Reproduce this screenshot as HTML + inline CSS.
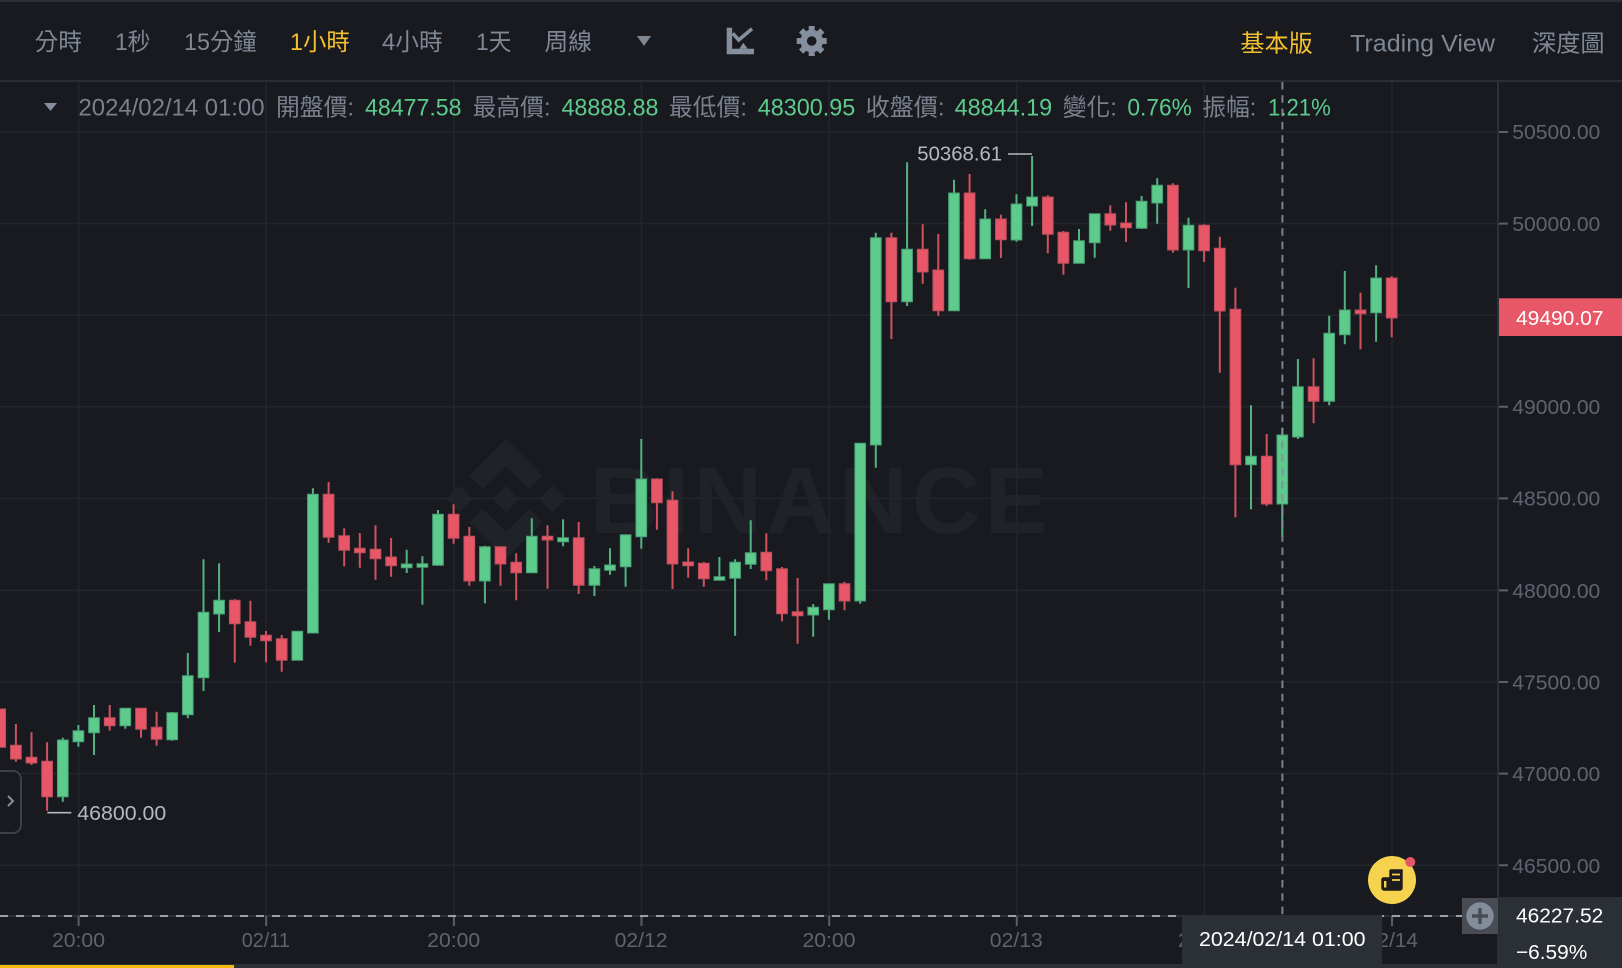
<!DOCTYPE html>
<html><head><meta charset="utf-8"><style>
html,body{margin:0;padding:0;background:#181a20;width:1622px;height:968px;overflow:hidden}
svg{display:block}
text{font-family:"Liberation Sans","Noto Sans CJK TC",sans-serif}
.h{font-size:24px;fill:#7f8793}
.y{fill:#f5c02f}
.r{font-size:24px;fill:#7a818d}
.g{font-size:24px;fill:#5ccb8b}
.p{font-size:20.5px;fill:#5e646f}
.t{font-size:20px;fill:#5e646f}
.m{font-size:20.5px;fill:#b4b8bf}
.w{font-size:20.5px;fill:#fff}
</style></head><body>
<svg width="1622" height="968" viewBox="0 0 1622 968" xmlns="http://www.w3.org/2000/svg">
<rect width="1622" height="968" fill="#181a20"/>
<rect width="1622" height="2" fill="#2b2f36"/>
<rect y="80" width="1622" height="2" fill="#2a2d33"/>

<!-- watermark -->
<g fill="#1f2226">
<polygon points="506,439 542.7,475.7 529.3,489 506,466.5 482.7,489 469.3,475.7"/>
<polygon points="506,559 542.7,522.3 529.3,509 506,531.5 482.7,509 469.3,522.3"/>
<polygon points="506,485.7 519.3,499 506,512.3 492.7,499"/>
<polygon points="459.3,485.7 472.6,499 459.3,512.3 446,499"/>
<polygon points="552.7,485.7 566,499 552.7,512.3 539.4,499"/>
<text x="590" y="533" font-size="95" font-weight="700" textLength="458" lengthAdjust="spacing" style="font-size:95px;font-weight:700">BINANCE</text>
</g>

<!-- grid -->
<path d="M0 132H1497M0 223.6H1497M0 315.2H1497M0 406.8H1497M0 498.4H1497M0 590.4H1497M0 682H1497M0 773.6H1497M0 865.2H1497M78.6 82V916M266.2 82V916M453.9 82V916M641.5 82V916M829.2 82V916M1016.8 82V916M1204.4 82V916M1392 82V916" stroke="#22252b" stroke-width="1.6" fill="none"/>

<!-- wicks -->
<path stroke="#d0525f" stroke-width="2" fill="none" d="M15.9 724V761.7M31.5 732.3V765M47.1 742.3V810.7M109.7 705V730.7M141 708.3V737.7M156.6 711.7V745.7M234.75 599.3V662.7M250.4 600.7V645.7M266 631V662.3M281.7 635V671.7M328.6 482V542.7M344.2 528.3V566.3M359.8 533V567.7M375.5 525.3V579.7M391.1 538V576.7M453.6 504.3V543.7M469.3 527V585.7M500.5 546.7V585.7M516.2 553.3V600.3M547.5 525.3V588.7M578.7 522V594M656.9 478.3V529.7M672.5 491.3V589M688.2 548.3V577.7M703.8 562V586.7M766.3 533.3V580.3M782 567V621.3M797.6 578V643.7M844.5 581.7V610.3M891.4 232.7V339M922.7 224.3V283.7M938.3 234V315.7M969.6 174V259.7M1000.9 214.7V258M1047.8 195.3V253.3M1063.4 231V274.7M1110.3 205.3V230.7M1126 202.3V242M1172.9 183.3V252.7M1204.1 224.3V262M1219.8 236.7V372.7M1235.4 287.7V517.3M1266.7 434V506M1313.6 358.3V423.3M1360.5 292.7V349.3M1391.7 276.3V337.3"/>
<path stroke="#52b381" stroke-width="2" fill="none" d="M62.8 737.7V801.7M78.4 725V746.7M94 705V755M125.3 708.3V728.7M172.2 712V740.7M187.8 653V718.3M203.5 559.3V691M219.1 563.3V632M312.9 488.3V633M406.7 549.7V573M422.4 556.3V604.7M438 510V565.7M484.9 545.7V603.3M531.8 518.3V572.7M563.1 519.3V546.3M594.4 566V596M610 548.3V574.7M625.6 534.7V586.7M641.3 439V548.7M719.4 557V580.3M735.1 559.3V635.7M750.7 520.3V569M813.2 604V636.7M828.9 583.7V619.7M860.2 443.3V603.7M875.8 232.7V467.7M907.1 162.3V306M954 179.7V310.7M985.2 209.3V258.7M1016.5 194.3V241.7M1032.1 156V226M1079 229V263.3M1094.7 213.7V257.7M1141.6 196V229M1157.2 178.3V223.7M1188.5 217.7V288M1251 405.3V509.3M1282.3 427.7V536.7M1297.9 359V439M1329.2 315.7V405.3M1344.8 271V344.3M1376.1 265.3V341.7"/>

<!-- bodies -->
<path fill="#e75767" stroke="#bb4f5c" stroke-width="1" d="M-5.15 709h10.7V747.3h-10.7zM10.55 745.3h10.7V759h-10.7zM26.15 757.3h10.7V763h-10.7zM41.75 761.3h10.7V796.7h-10.7zM104.35 717.7h10.7V725.7h-10.7zM135.65 708.3h10.7V729.3h-10.7zM151.25 727.3h10.7V739.3h-10.7zM229.4 600.3h10.7V623.7h-10.7zM245.05 621.7h10.7V637.3h-10.7zM260.65 635.3h10.7V640.7h-10.7zM276.35 638.7h10.7V660.3h-10.7zM323.25 494.3h10.7V537.3h-10.7zM338.85 535.7h10.7V550.3h-10.7zM354.45 548.3h10.7V552.7h-10.7zM370.15 549.3h10.7V558.7h-10.7zM385.75 557h10.7V565.7h-10.7zM448.25 514.3h10.7V538.3h-10.7zM463.95 536.3h10.7V581h-10.7zM495.15 546.7h10.7V564h-10.7zM510.85 562.3h10.7V572.7h-10.7zM542.15 536.3h10.7V540h-10.7zM573.35 537.7h10.7V585.3h-10.7zM651.55 479h10.7V502.7h-10.7zM667.15 500.3h10.7V564h-10.7zM682.85 562h10.7V565.7h-10.7zM698.45 563.3h10.7V578.7h-10.7zM760.95 552.3h10.7V570.7h-10.7zM776.65 568.7h10.7V613.7h-10.7zM792.25 611.7h10.7V615.7h-10.7zM839.15 583.7h10.7V601h-10.7zM886.05 237.7h10.7V301.7h-10.7zM917.35 249.3h10.7V272h-10.7zM932.95 270h10.7V310.7h-10.7zM964.25 193h10.7V258.7h-10.7zM995.55 219h10.7V239.7h-10.7zM1042.45 197h10.7V234.3h-10.7zM1058.05 232.3h10.7V263.3h-10.7zM1104.95 213.7h10.7V225h-10.7zM1120.65 223h10.7V227.7h-10.7zM1167.55 185.3h10.7V250h-10.7zM1198.75 225.3h10.7V250.7h-10.7zM1214.45 248.3h10.7V311h-10.7zM1230.05 309.3h10.7V464.7h-10.7zM1261.35 456.3h10.7V504h-10.7zM1308.25 386.7h10.7V401.3h-10.7zM1355.15 310h10.7V313.7h-10.7zM1386.35 278h10.7V318h-10.7z"/>
<path fill="#5ccb8b" stroke="#4a9f74" stroke-width="1" d="M57.45 740h10.7V796.7h-10.7zM73.05 730.7h10.7V741.7h-10.7zM88.65 717.7h10.7V732.7h-10.7zM119.95 708.3h10.7V725.7h-10.7zM166.85 712.7h10.7V739.7h-10.7zM182.45 675.7h10.7V714.7h-10.7zM198.15 612.3h10.7V677.7h-10.7zM213.75 600.3h10.7V614h-10.7zM291.95 631.3h10.7V660.3h-10.7zM307.55 494.3h10.7V633h-10.7zM401.35 564h10.7V567.7h-10.7zM417.05 563.7h10.7V567.3h-10.7zM432.65 514.3h10.7V565.3h-10.7zM479.55 546.7h10.7V581h-10.7zM526.45 536.3h10.7V572.7h-10.7zM557.75 537.7h10.7V541.7h-10.7zM589.05 568.7h10.7V585.3h-10.7zM604.65 565h10.7V570.3h-10.7zM620.25 534.7h10.7V566.7h-10.7zM635.95 479h10.7V536.7h-10.7zM714.05 576.7h10.7V580.3h-10.7zM729.75 562.3h10.7V578.3h-10.7zM745.35 552.7h10.7V564.3h-10.7zM807.85 607.3h10.7V615h-10.7zM823.55 583.7h10.7V609.7h-10.7zM854.85 443.3h10.7V601h-10.7zM870.45 237.7h10.7V445h-10.7zM901.75 249.3h10.7V301.7h-10.7zM948.65 193h10.7V310.7h-10.7zM979.85 219h10.7V258.7h-10.7zM1011.15 204h10.7V240h-10.7zM1026.75 197h10.7V206h-10.7zM1073.65 240.7h10.7V263.3h-10.7zM1089.35 213.7h10.7V242.7h-10.7zM1136.25 201.3h10.7V228.3h-10.7zM1151.85 185.3h10.7V203h-10.7zM1183.15 225.3h10.7V250h-10.7zM1245.65 456.3h10.7V464.7h-10.7zM1276.95 435h10.7V504h-10.7zM1292.55 386.7h10.7V437h-10.7zM1323.85 333.3h10.7V401.3h-10.7zM1339.45 310h10.7V334.7h-10.7zM1370.75 278h10.7V312.7h-10.7z"/>

<!-- header -->
<text class="h" x="34.5" y="50" textLength="47.5" lengthAdjust="spacingAndGlyphs">分時</text>
<text class="h" x="115" y="50" textLength="35.5" lengthAdjust="spacingAndGlyphs">1秒</text>
<text class="h" x="184" y="50" textLength="72.6" lengthAdjust="spacingAndGlyphs">15分鐘</text>
<text class="h y" x="290" y="50" textLength="59.7" lengthAdjust="spacingAndGlyphs">1小時</text>
<text class="h" x="382" y="50" textLength="60.8" lengthAdjust="spacingAndGlyphs">4小時</text>
<text class="h" x="476" y="50" textLength="35.5" lengthAdjust="spacingAndGlyphs">1天</text>
<text class="h" x="544.5" y="50" textLength="47.5" lengthAdjust="spacingAndGlyphs">周線</text>
<polygon points="637,36 651,36 644,46" fill="#7f8793"/>
<path d="M729.4 27.7V51.5H754" fill="none" stroke="#848e9c" stroke-width="5.4"/>
<polyline points="732.7,33.3 738.7,40 752,28.7" fill="none" stroke="#848e9c" stroke-width="3.6"/>
<polygon points="743.3,42.7 739.3,48.7 747.7,48.7" fill="#848e9c"/>
<g transform="translate(811.7 41)" stroke="#848e9c" fill="none">
<circle r="8" stroke-width="6.5"/>
<path stroke-width="6" d="M0-15V15M-15 0H15M-10.6-10.6L10.6 10.6M-10.6 10.6L10.6-10.6"/>
<circle r="4.8" fill="#181a20" stroke="none"/>
</g>
<text class="h y" x="1240.4" y="51.5" textLength="72.4" lengthAdjust="spacingAndGlyphs">基本版</text>
<text class="h" x="1350" y="51.5" textLength="145" lengthAdjust="spacingAndGlyphs">Trading View</text>
<text class="h" x="1532" y="51.5" textLength="72.6" lengthAdjust="spacingAndGlyphs">深度圖</text>

<!-- crosshair vertical -->
<path d="M1282.4 82V924" stroke="#848e9c" stroke-width="2" stroke-dasharray="7.5 5.8" fill="none" opacity=".9"/>

<!-- info row -->
<polygon points="44,103 57,103 50.5,111" fill="#848e9c"/>
<text class="r" x="78.5" y="115.5" textLength="186" lengthAdjust="spacingAndGlyphs">2024/02/14 01:00</text>
<text class="r" x="276" y="115.5" textLength="78" lengthAdjust="spacingAndGlyphs">開盤價:</text>
<text class="g" x="365" y="115.5" textLength="96.5" lengthAdjust="spacingAndGlyphs">48477.58</text>
<text class="r" x="472.6" y="115.5" textLength="78" lengthAdjust="spacingAndGlyphs">最高價:</text>
<text class="g" x="561.5" y="115.5" textLength="97" lengthAdjust="spacingAndGlyphs">48888.88</text>
<text class="r" x="669" y="115.5" textLength="78" lengthAdjust="spacingAndGlyphs">最低價:</text>
<text class="g" x="757.8" y="115.5" textLength="97.4" lengthAdjust="spacingAndGlyphs">48300.95</text>
<text class="r" x="865.6" y="115.5" textLength="79" lengthAdjust="spacingAndGlyphs">收盤價:</text>
<text class="g" x="954.6" y="115.5" textLength="97.6" lengthAdjust="spacingAndGlyphs">48844.19</text>
<text class="r" x="1062.8" y="115.5" textLength="54" lengthAdjust="spacingAndGlyphs">變化:</text>
<text class="g" x="1127.4" y="115.5" textLength="64.4" lengthAdjust="spacingAndGlyphs">0.76%</text>
<text class="r" x="1202.4" y="115.5" textLength="54" lengthAdjust="spacingAndGlyphs">振幅:</text>
<text class="g" x="1268" y="115.5" textLength="62.8" lengthAdjust="spacingAndGlyphs">1.21%</text>

<!-- extremes -->
<path d="M47.3 812.7H71.3M1008 154H1032" stroke="#b4b8bf" stroke-width="1.6" fill="none"/>
<text class="m" x="77.3" y="820" textLength="89" lengthAdjust="spacingAndGlyphs">46800.00</text>
<text class="m" x="917.3" y="160.4" textLength="84.8" lengthAdjust="spacingAndGlyphs">50368.61</text>

<!-- left tab -->
<rect x="-10" y="771" width="31" height="62" rx="8" fill="#181a20" stroke="#3c4048" stroke-width="2"/>
<path d="M8 796l5 5-5 5" fill="none" stroke="#848e9c" stroke-width="2"/>

<!-- axes -->
<rect x="1497" y="82" width="2" height="882" fill="#2b2f36"/>
<rect y="915" width="1497" height="2" fill="#2b2f36"/>
<path d="M1499 132H1508M1499 223.6H1508M1499 406.8H1508M1499 498.4H1508M1499 590.4H1508M1499 682H1508M1499 773.6H1508M1499 865.2H1508M78.6 916V926M266.2 916V926M453.9 916V926M641.5 916V926M829.2 916V926M1016.8 916V926M1392 916V926" stroke="#5a606b" stroke-width="2" fill="none"/>
<text class="p" x="1512.3" y="139.2" textLength="88" lengthAdjust="spacingAndGlyphs">50500.00</text>
<text class="p" x="1512.3" y="230.8" textLength="88" lengthAdjust="spacingAndGlyphs">50000.00</text>
<text class="p" x="1512.3" y="414" textLength="88" lengthAdjust="spacingAndGlyphs">49000.00</text>
<text class="p" x="1512.3" y="505.6" textLength="88" lengthAdjust="spacingAndGlyphs">48500.00</text>
<text class="p" x="1512.3" y="597.8" textLength="88" lengthAdjust="spacingAndGlyphs">48000.00</text>
<text class="p" x="1512.3" y="689.6" textLength="88" lengthAdjust="spacingAndGlyphs">47500.00</text>
<text class="p" x="1512.3" y="781" textLength="88" lengthAdjust="spacingAndGlyphs">47000.00</text>
<text class="p" x="1512.3" y="872.8" textLength="88" lengthAdjust="spacingAndGlyphs">46500.00</text>

<text class="t" x="52" y="947" textLength="53" lengthAdjust="spacingAndGlyphs">20:00</text>
<text class="t" x="241.7" y="947" textLength="48.3" lengthAdjust="spacingAndGlyphs">02/11</text>
<text class="t" x="427.2" y="947" textLength="53" lengthAdjust="spacingAndGlyphs">20:00</text>
<text class="t" x="614.6" y="947" textLength="53" lengthAdjust="spacingAndGlyphs">02/12</text>
<text class="t" x="802.5" y="947" textLength="53" lengthAdjust="spacingAndGlyphs">20:00</text>
<text class="t" x="989.8" y="947" textLength="53" lengthAdjust="spacingAndGlyphs">02/13</text>
<text class="t" x="1178" y="947" textLength="53" lengthAdjust="spacingAndGlyphs">20:00</text>
<text class="t" x="1366" y="947" textLength="52" lengthAdjust="spacingAndGlyphs">02/14</text>

<!-- crosshair horizontal -->
<path d="M0 916H1462" stroke="#9aa0ab" stroke-width="2" stroke-dasharray="8 8" fill="none"/>
<path d="M1282.4 916V926" stroke="#e0e2e6" stroke-width="2" fill="none"/>

<!-- labels -->
<rect x="1499" y="298.3" width="123" height="37.7" fill="#e75767"/>
<text class="w" x="1516" y="325" textLength="87.5" lengthAdjust="spacingAndGlyphs">49490.07</text>

<rect x="1182" y="915" width="200" height="49" fill="#2b2f36"/>
<text class="w" x="1199" y="946" textLength="166.5" lengthAdjust="spacingAndGlyphs">2024/02/14 01:00</text>

<rect x="1499" y="897" width="123" height="67" fill="#2b2f36"/>
<text class="w" x="1516" y="922.6" textLength="87.3" lengthAdjust="spacingAndGlyphs">46227.52</text>
<text class="w" x="1516" y="959.2" textLength="71.3" lengthAdjust="spacingAndGlyphs">−6.59%</text>

<rect x="1462" y="898" width="36" height="36" fill="#474c55"/>
<circle cx="1480" cy="916" r="13.7" fill="#848c98"/>
<path d="M1472 916H1488M1480 908V924" stroke="#474c55" stroke-width="3.4" fill="none"/>

<!-- help button -->
<circle cx="1392" cy="880" r="24" fill="#f5d34f"/>
<circle cx="1410.3" cy="862" r="5" fill="#e75767"/>
<path d="M1391 869.3H1402.7V888a2.7 2.7 0 0 1-2.7 2.7H1384a2.7 2.7 0 0 1-2.7-2.7V879.5a2.2 2.2 0 0 1 2.2-2.2H1389.3V871a1.7 1.7 0 0 1 1.7-1.7z" fill="#1c1c1c"/>
<path d="M1392 874.5H1400M1392 880H1400" stroke="#f5d34f" stroke-width="1.8" fill="none"/>
<rect x="1384" y="881" width="2.4" height="6.5" fill="#f5d34f"/>

<!-- bottom -->
<rect y="964" width="1622" height="4" fill="#2b2f36"/>
<rect y="965" width="234" height="3" fill="#f0b90b"/>
</svg>
</body></html>
